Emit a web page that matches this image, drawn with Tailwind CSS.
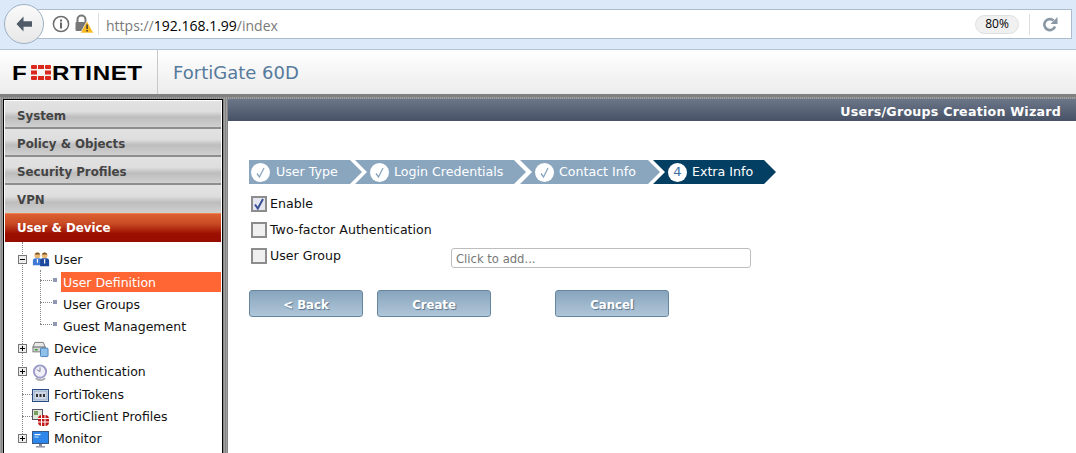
<!DOCTYPE html>
<html lang="en">
<head>
<meta charset="UTF-8" />
<title>FortiGate 60D</title>
<script src="https://cdn.jsdelivr.net/npm/@tailwindcss/browser@4"></script>
</head>
<body class="h-[453px] w-[1076px] overflow-hidden bg-white font-['DejaVu_Sans',sans-serif] text-[#111]">

<!-- browser bar -->
<div class="relative h-[50px] border-b border-[#b4c4d6] bg-[#dbe9f8] pl-[30px] pr-[4px] pt-[9px]">
  <div class="flex h-[30px] items-center border border-[#aebccd] bg-white pl-[21px] pr-[13px]">
    <svg class="h-[18px] w-[18px] shrink-0" viewBox="0 0 18 18"><circle cx="9" cy="9" r="7.6" fill="none" stroke="#6e6e6e" stroke-width="1.5"/><rect x="8" y="7.5" width="2" height="6" fill="#666"/><rect x="8" y="4.5" width="2" height="2" fill="#666"/></svg>
    <svg class="ml-[4px] h-[20px] w-[20px] shrink-0" viewBox="0 0 20 20"><path d="M3.500 8V5.500a4 4 0 0 1 8 0V8" fill="none" stroke="#777" stroke-width="2"/><rect x="1.500" y="8" width="12" height="9" rx="1" fill="#777"/><path d="M13 7l6.500 12h-13z" fill="#fbb81f" stroke="#fff" stroke-width=".6"/><rect x="12.400" y="10.500" width="1.400" height="4.500" fill="#333"/><rect x="12.400" y="16" width="1.400" height="1.500" fill="#333"/></svg>
    <div class="ml-[4px] h-[22px] w-px bg-[#dcdcdc]"></div>
    <div class="ml-[7px] pt-[2px] font-['Open_Sans',sans-serif] text-[14px] text-[#7a7a7a]">https://<span class="text-black">192.168.1.99</span>/index</div>
    <div class="ml-auto flex h-[19px] w-[44px] items-center justify-center rounded-full border border-[#e0e0e0] bg-[#f0f0f0] font-['Open_Sans',sans-serif] text-[12px] text-black">80%</div>
    <div class="ml-[10px] h-[21px] w-px bg-[#dcdcdc]"></div>
    <svg class="ml-[12px] h-[16px] w-[16px] shrink-0" viewBox="0 0 16 16"><path d="M13 10.500a5.500 5.500 0 1 1-1.500-6" fill="none" stroke="#8a98a6" stroke-width="2.600"/><path d="M15.500 1v7h-7z" fill="#8a98a6"/></svg>
  </div>
  <div class="absolute left-[4px] top-[4px] flex h-[40px] w-[40px] items-center justify-center rounded-full border border-[#9fb0c2] bg-[linear-gradient(#fafafa,#e8e8e8)]">
    <svg class="h-[20px] w-[20px]" viewBox="0 0 20 20"><path d="M9.500 2.500L2.500 10l7 7.500V12.800H18V7.200H9.500z" fill="#4e5a68"/></svg>
  </div>
</div>

<!-- fortinet header -->
<div class="flex h-[44px] items-center bg-[linear-gradient(#fff,#ececec)]">
  <div class="flex h-full w-[158px] items-center border-r border-[#c8c8c8] pl-[12px]">
    <div class="flex items-center font-['Liberation_Sans',sans-serif] text-[21px] font-bold leading-none tracking-[.5px] text-black">
      <span class="inline-block w-[19px] origin-left scale-x-[1.150]">F</span>
      <svg class="mr-[1px] h-[15px] w-[20px]" viewBox="0 0 20 15">
        <g fill="#da291c"><rect x="0" y="0" width="6" height="4" rx="1"/><rect x="7" y="0" width="6" height="4"/><rect x="14" y="0" width="6" height="4" rx="1"/><rect x="0" y="5.500" width="6" height="4"/><rect x="14" y="5.500" width="6" height="4"/><rect x="0" y="11" width="6" height="4" rx="1"/><rect x="7" y="11" width="6" height="4"/><rect x="14" y="11" width="6" height="4" rx="1"/></g>
      </svg>
      <span class="inline-block origin-left scale-x-[1.150] whitespace-nowrap">RTINET</span>
    </div>
  </div>
  <div class="pl-[15px] text-[18px] text-[#557a9c]">FortiGate 60D</div>
</div>

<!-- page -->
<div class="flex h-[359px] overflow-hidden border-t-[3px] border-[#808080] bg-[repeating-linear-gradient(90deg,#a0a0a0_0,#a0a0a0_1px,#868686_1px,#868686_2px)] pt-[2px]">

  <!-- sidebar -->
  <div class="ml-[3px] h-[360px] w-[220px] shrink-0 border border-black bg-white p-px">
    <div class="h-[28px] border-b-2 border-[#8e8e8e] bg-[linear-gradient(#e2e2e2_0%,#dedede_40%,#bdbdbd_62%,#d0d0d0_100%)] pl-[12px] text-[11.800px] font-bold leading-[30px] text-[#444]">System</div>
    <div class="h-[28px] border-b-2 border-[#8e8e8e] bg-[linear-gradient(#e2e2e2_0%,#dedede_40%,#bdbdbd_62%,#d0d0d0_100%)] pl-[12px] text-[11.800px] font-bold leading-[30px] text-[#444]">Policy &amp; Objects</div>
    <div class="h-[28px] border-b-2 border-[#8e8e8e] bg-[linear-gradient(#e2e2e2_0%,#dedede_40%,#bdbdbd_62%,#d0d0d0_100%)] pl-[12px] text-[11.800px] font-bold leading-[30px] text-[#444]">Security Profiles</div>
    <div class="h-[28px] bg-[linear-gradient(#e2e2e2_0%,#dedede_40%,#bdbdbd_62%,#d0d0d0_100%)] pl-[12px] text-[11.800px] font-bold leading-[30px] text-[#444]">VPN</div>
    <div class="h-[29px] border-t border-[#f08050] bg-[linear-gradient(#dc6030_0%,#c84a24_35%,#9c0f00_70%,#960c00_100%)] pl-[12px] text-[11.800px] font-bold leading-[28px] text-white">User &amp; Device</div>

    <!-- tree -->
    <div class="relative pt-[6px] text-[12.500px]">
      <!-- dotted connectors -->
      <div class="absolute left-[17px] top-0 h-[12px] border-l border-dotted border-[#888]"></div>
      <div class="absolute left-[17px] top-[20px] h-[176px] border-l border-dotted border-[#888]"></div>
      <div class="absolute left-[35px] top-[28px] h-[54px] border-l border-dotted border-[#888]"></div>
      <div class="absolute left-[35px] top-[38px] w-[12px] border-t border-dotted border-[#888]"></div>
      <div class="absolute left-[35px] top-[60px] w-[12px] border-t border-dotted border-[#888]"></div>
      <div class="absolute left-[35px] top-[82px] w-[12px] border-t border-dotted border-[#888]"></div>
      <div class="absolute left-[17px] top-[152px] w-[10px] border-t border-dotted border-[#888]"></div>
      <div class="absolute left-[17px] top-[174px] w-[10px] border-t border-dotted border-[#888]"></div>

      <div class="flex h-[24px] items-center pl-[13px]">
        <span class="relative z-10 flex h-[9px] w-[9px] -translate-y-[1px] items-center justify-center border border-[#777] bg-[#eee]"><span class="h-px w-[5px] bg-black"></span></span>
        <svg class="ml-[5px] h-[17px] w-[18px] -translate-y-[1px]" viewBox="0 0 20 17"><circle cx="6" cy="4" r="3.200" fill="#e8b878"/><path d="M6 .8a3.200 3.200 0 0 1 3 2.200H3a3.200 3.200 0 0 1 3-2.200z" fill="#7a5020"/><path d="M1 15V10a3 3 0 0 1 3-3h4a3 3 0 0 1 3 3v5z" fill="#3f7ad8"/><circle cx="14" cy="4" r="3.200" fill="#e8b878"/><path d="M14 .8a3.200 3.200 0 0 1 3 2.200h-6a3.200 3.200 0 0 1 3-2.200z" fill="#7a5020"/><path d="M9 16v-6a3 3 0 0 1 3-3h4a3 3 0 0 1 3 3v6z" fill="#1d4a9c"/><rect x="13.400" y="8" width="1.300" height="5" fill="#fff"/><rect x="5.400" y="8" width="1.300" height="4" fill="#fff"/></svg>
        <span class="ml-[4px] leading-none">User</span>
      </div>
      <div class="flex h-[22px] items-center pl-[48px]">
        <span class="mr-[4px] h-[4px] w-[4px] -translate-y-[3px] bg-[#8f98b0]"></span>
        <span class="-mt-[2px] flex h-[20px] flex-1 items-center bg-[#ff6633] pl-[2px] pt-[2px] text-white">User Definition</span>
      </div>
      <div class="flex h-[22px] items-center pl-[48px]">
        <span class="mr-[4px] h-[4px] w-[4px] -translate-y-[3px] bg-[#8f98b0]"></span>
        <span class="pl-[2px]">User Groups</span>
      </div>
      <div class="flex h-[22px] items-center pl-[48px]">
        <span class="mr-[4px] h-[4px] w-[4px] -translate-y-[3px] bg-[#8f98b0]"></span>
        <span class="pl-[2px]">Guest Management</span>
      </div>
      <div class="flex h-[22px] items-center pl-[13px]">
        <span class="relative z-10 flex h-[9px] w-[9px] -translate-y-[1px] items-center justify-center border border-[#777] bg-[#eee]"><span class="relative h-px w-[5px] bg-black"><span class="absolute -top-[2px] left-[2px] h-[5px] w-px bg-black"></span></span></span>
        <svg class="ml-[5px] h-[17px] w-[17px]" viewBox="0 0 18 17"><path d="M3 1h9l2 5H1z" fill="#e8e8e8" stroke="#777"/><rect x="1" y="6" width="13" height="5" fill="#d8d8d8" stroke="#777"/><rect x="3" y="8" width="3" height="1.500" fill="#2a9a2a"/><rect x="9" y="7" width="8" height="9" rx="1" fill="#8fc0ea" stroke="#4a80b8"/></svg>
        <span class="ml-[5px] leading-none">Device</span>
      </div>
      <div class="flex h-[24px] items-center pl-[13px]">
        <span class="relative z-10 flex h-[9px] w-[9px] -translate-y-[1px] items-center justify-center border border-[#777] bg-[#eee]"><span class="relative h-px w-[5px] bg-black"><span class="absolute -top-[2px] left-[2px] h-[5px] w-px bg-black"></span></span></span>
        <svg class="ml-[5px] h-[17px] w-[17px]" viewBox="0 0 18 18"><circle cx="8.500" cy="8" r="6.500" fill="#f0f0f8" stroke="#9a9ac8" stroke-width="2"/><path d="M8.500 3.500V8L5 6" fill="none" stroke="#808098"/><path d="M4 15a7 7 0 0 0 10 0" fill="none" stroke="#aaa" stroke-width="1.800"/></svg>
        <span class="ml-[5px] leading-none">Authentication</span>
      </div>
      <div class="flex h-[22px] items-center pl-[27px]">
        <svg class="h-[13px] w-[17px]" viewBox="0 0 17 13"><rect x=".5" y=".5" width="16" height="12" fill="#dfe8f4" stroke="#2b4a80"/><rect x="2" y="2" width="13" height="9" fill="#cfd8e6" stroke="#6a88b0" stroke-width=".6"/><path d="M4 5h2v3H4zM7.500 5h2v3h-2zM11 5h2v3h-2z" fill="#333"/></svg>
        <span class="ml-[5px] leading-none">FortiTokens</span>
      </div>
      <div class="flex h-[22px] items-center pl-[27px]">
        <svg class="h-[17px] w-[17px]" viewBox="0 0 17 17"><rect x=".5" y=".5" width="10" height="10" fill="#dfe8d8" stroke="#556"/><rect x="2" y="2" width="4" height="4" fill="#7aa060"/><rect x="6" y="6" width="11" height="11" rx="4" fill="#c01818"/><path d="M6 9.500h11M6 13h11M9.500 6v11M13 6v11" stroke="#fff" stroke-width="1"/></svg>
        <span class="ml-[5px] leading-none">FortiClient Profiles</span>
      </div>
      <div class="flex h-[22px] items-center pl-[13px]">
        <span class="relative z-10 flex h-[9px] w-[9px] -translate-y-[1px] items-center justify-center border border-[#777] bg-[#eee]"><span class="relative h-px w-[5px] bg-black"><span class="absolute -top-[2px] left-[2px] h-[5px] w-px bg-black"></span></span></span>
        <svg class="ml-[5px] h-[17px] w-[17px]" viewBox="0 0 17 17"><rect x=".5" y=".5" width="16" height="12" fill="#2f86ea" stroke="#3a5a88"/><rect x="2.500" y="3" width="6" height="1.200" fill="#fff"/><rect x="2.500" y="5.500" width="4" height="1" fill="#cfe4fb"/><rect x="7" y="13" width="3" height="2" fill="#889"/><rect x="4" y="15" width="9" height="1.600" fill="#99a"/></svg>
        <span class="ml-[5px] leading-none">Monitor</span>
      </div>
    </div>
  </div>

  <!-- main -->
  <div class="ml-[5px] flex-1 bg-white">
    <div class="h-[22px] bg-[linear-gradient(#6c7689,#485266)] pr-[15px] text-right text-[12.600px] font-bold leading-[25px] tracking-[.25px] text-white">Users/Groups Creation Wizard</div>
    <div class="pl-[21px] pt-[39px] text-[12.600px]">
      <div class="flex h-[24px] text-white">
        <div class="flex w-[113px] items-center bg-[#8aa6bf] pl-[2px] [clip-path:polygon(0_0,calc(100%-12px)_0,100%_50%,calc(100%-12px)_100%,0_100%)]">
          <span class="flex h-[19px] w-[19px] items-center justify-center rounded-full bg-white"><svg class="h-[13px] w-[13px]" viewBox="0 0 13 13"><path d="M3 7.500l2.500 3.500L10 2" fill="none" stroke="#8aa6bf" stroke-width="1.300"/></svg></span>
          <span class="ml-[6px] whitespace-nowrap">User Type</span>
        </div>
        <div class="-ml-[7px] flex w-[171px] items-center bg-[#8aa6bf] pl-[15px] [clip-path:polygon(0_0,calc(100%-12px)_0,100%_50%,calc(100%-12px)_100%,0_100%,12px_50%)]">
          <span class="flex h-[19px] w-[19px] items-center justify-center rounded-full bg-white"><svg class="h-[13px] w-[13px]" viewBox="0 0 13 13"><path d="M3 7.500l2.500 3.500L10 2" fill="none" stroke="#8aa6bf" stroke-width="1.300"/></svg></span>
          <span class="ml-[5px] whitespace-nowrap">Login Credentials</span>
        </div>
        <div class="-ml-[6px] flex w-[140px] items-center bg-[#8aa6bf] pl-[15px] [clip-path:polygon(0_0,calc(100%-12px)_0,100%_50%,calc(100%-12px)_100%,0_100%,12px_50%)]">
          <span class="flex h-[19px] w-[19px] items-center justify-center rounded-full bg-white"><svg class="h-[13px] w-[13px]" viewBox="0 0 13 13"><path d="M3 7.500l2.500 3.500L10 2" fill="none" stroke="#8aa6bf" stroke-width="1.300"/></svg></span>
          <span class="ml-[5px] whitespace-nowrap">Contact Info</span>
        </div>
        <div class="-ml-[7px] flex w-[123px] items-center bg-[#033f63] pl-[15px] [clip-path:polygon(0_0,calc(100%-12px)_0,100%_50%,calc(100%-12px)_100%,0_100%,12px_50%)]">
          <span class="flex h-[19px] w-[19px] items-center justify-center rounded-full bg-white text-[13px] text-[#3a6ea5]">4</span>
          <span class="ml-[5px] whitespace-nowrap">Extra Info</span>
        </div>
      </div>

      <div class="mt-[12px] flex h-[16px] items-center pl-[2px]">
        <span class="flex h-[16px] w-[16px] items-center justify-center border-2 border-[#8c8c8c] bg-[#e4e6f0]"><svg class="h-[12px] w-[12px]" viewBox="0 0 12 12"><path d="M2 6.500L4.800 10.500 10 1" fill="none" stroke="#3b4f96" stroke-width="2"/></svg></span>
        <span class="ml-[3px]">Enable</span>
      </div>
      <div class="mt-[10px] flex h-[16px] items-center pl-[2px]">
        <span class="h-[16px] w-[16px] border-2 border-[#8c8c8c] bg-[#f0f0f0]"></span>
        <span class="ml-[3px]">Two-factor Authentication</span>
      </div>
      <div class="mt-[10px] flex h-[20px] items-start pl-[2px]">
        <span class="h-[16px] w-[16px] border-2 border-[#8c8c8c] bg-[#f0f0f0]"></span>
        <span class="ml-[3px] w-[181px] leading-[16px]">User Group</span>
        <span class="h-[20px] w-[300px] rounded-[3px] border border-[#bdbdbd] pl-[4px] text-[11.600px] leading-[21px] text-[#777]">Click to add...</span>
      </div>

      <div class="mt-[22px] flex">
        <button class="h-[27px] w-[114px] rounded-[3px] border border-[#66869f] bg-[linear-gradient(#88a5bd,#b0c6d9)] pt-[4px] text-[11.700px] font-bold text-white [text-shadow:1px_1px_1px_#56728a]">&lt; Back</button>
        <button class="ml-[14px] h-[27px] w-[114px] rounded-[3px] border border-[#66869f] bg-[linear-gradient(#88a5bd,#b0c6d9)] pt-[4px] text-[11.700px] font-bold text-white [text-shadow:1px_1px_1px_#56728a]">Create</button>
        <button class="ml-[64px] h-[27px] w-[114px] rounded-[3px] border border-[#66869f] bg-[linear-gradient(#88a5bd,#b0c6d9)] pt-[4px] text-[11.700px] font-bold text-white [text-shadow:1px_1px_1px_#56728a]">Cancel</button>
      </div>
    </div>
  </div>
</div>
</body>
</html>
